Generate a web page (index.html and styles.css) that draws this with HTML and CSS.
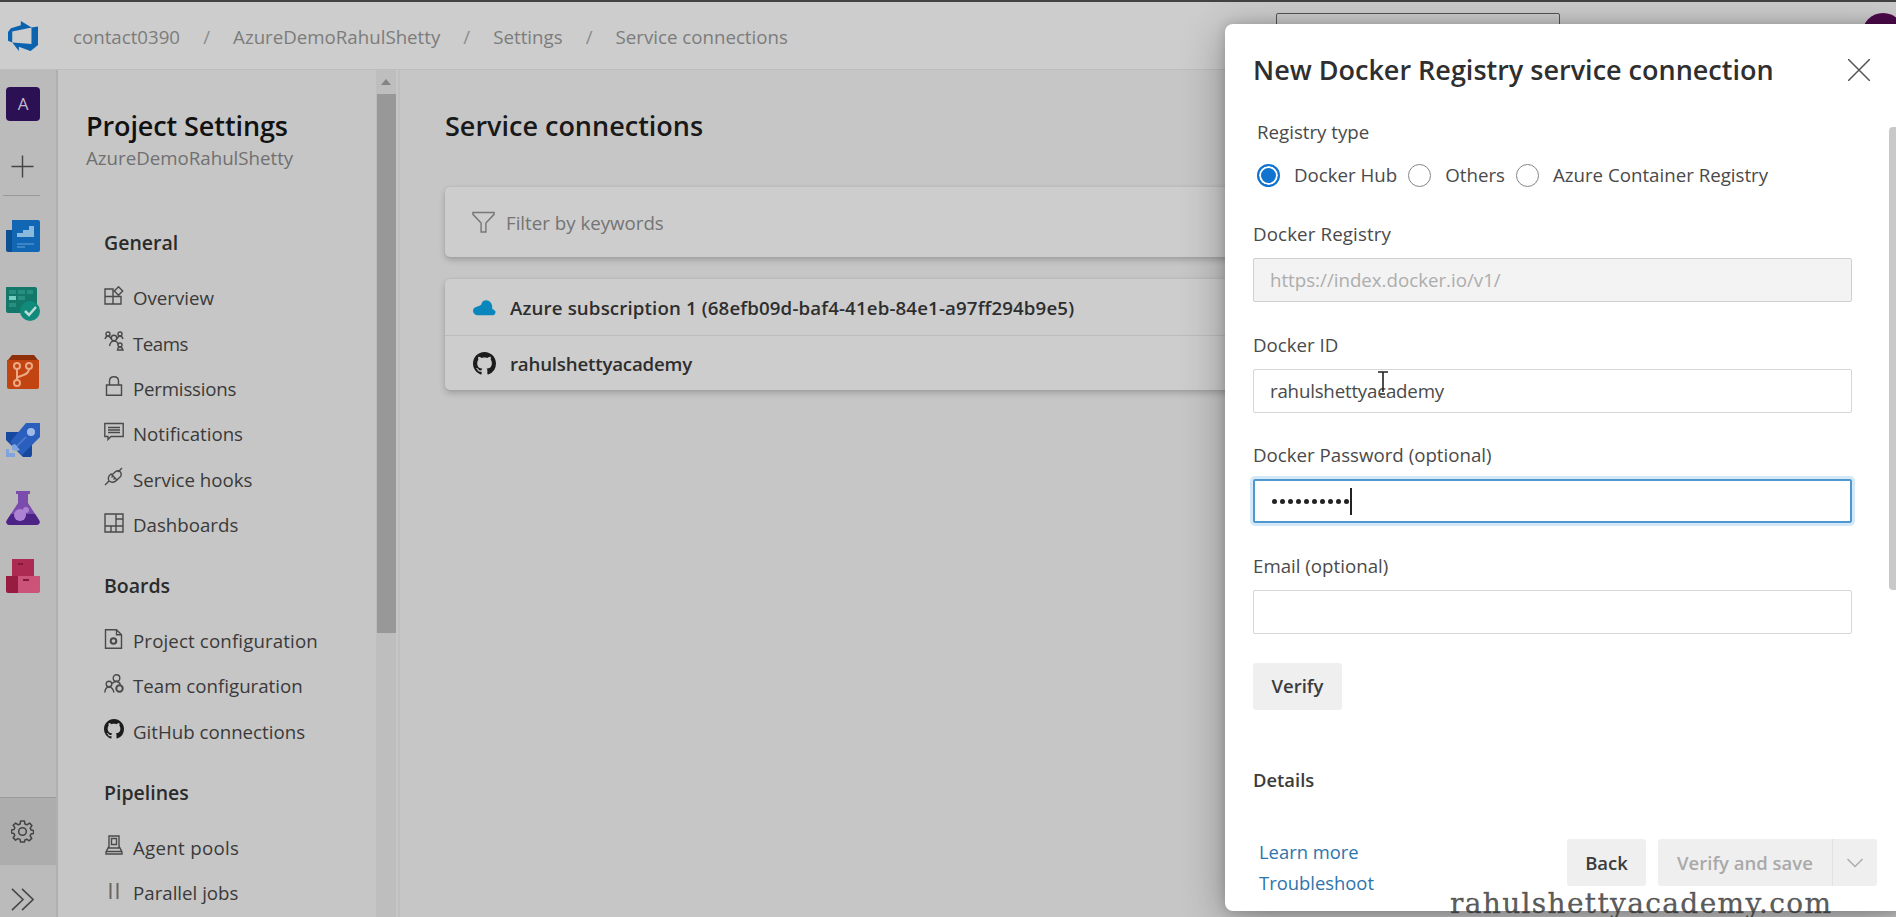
FILE: index.html
```html
<!DOCTYPE html>
<html lang="en">
<head>
<meta charset="utf-8">
<title>Service connections</title>
<link rel="stylesheet" href="styles.css">
</head>
<body>
<svg width="0" height="0" class="defs">
  <symbol id="github" viewBox="0 0 16 16"><path d="M8 0C3.58 0 0 3.58 0 8c0 3.54 2.29 6.53 5.47 7.59.4.07.55-.17.55-.38 0-.19-.01-.82-.01-1.49-2.01.37-2.53-.49-2.69-.94-.09-.23-.48-.94-.82-1.13-.28-.15-.68-.52-.01-.53.63-.01 1.08.58 1.23.82.72 1.21 1.87.87 2.33.66.07-.52.28-.87.51-1.07-1.78-.2-3.64-.89-3.64-3.95 0-.87.31-1.59.82-2.15-.08-.2-.36-1.02.08-2.12 0 0 .67-.21 2.2.82.64-.18 1.32-.27 2-.27s1.36.09 2 .27c1.53-1.04 2.2-.82 2.2-.82.44 1.1.16 1.92.08 2.12.51.56.82 1.27.82 2.15 0 3.07-1.87 3.75-3.65 3.95.29.25.54.73.54 1.48 0 1.07-.01 1.93-.01 2.2 0 .21.15.46.55.38A8.01 8.01 0 0 0 16 8c0-4.42-3.58-8-8-8z"/></symbol>
</svg>
<div class="app">
  <header class="topbar">
    <svg class="logo" viewBox="1 1 14 14"><path fill="#0b62ae" d="M15 3.620v8.550l-3.500 2.870-5.425-1.975v1.960L3.004 11.010l8.950.7V4.046L15 3.620zm-2.984.428L6.994 1v2.001L2.383 4.356 1 6.130v4.029l1.978.873V5.869l9.038-1.821z"/></svg>
    <nav class="crumbs">
      <span>contact0390</span><i>/</i><span>AzureDemoRahulShetty</span><i>/</i><span>Settings</span><i>/</i><span>Service connections</span>
    </nav>
    <div class="search"></div>
    <div class="avatar"></div>
  </header>
  <div class="body">
    <aside class="rail">
      <div class="project">A</div>
      <svg class="plus" viewBox="0 0 24 24"><path d="M12 0.500V23.500M0.500 12H23.500" stroke="#444" stroke-width="1.500"/></svg>
      <div class="line"></div>
      <svg class="tile" viewBox="0 0 34 34"><path fill="#0c4f93" d="M0 11h8v22H2q-2 0-2-2z"/><path fill="#1267b5" d="M6 1h26q2 0 2 2v28q0 2-2 2H6z"/><path fill="#8bb9dc" d="M11 18v-4h6v-3h6V7h5v11z"/><path fill="#3c86c6" d="M11 24h17v2H11zM11 27h8v2h-8z"/></svg>
      <svg class="tile" viewBox="0 0 34 34"><path fill="#13776a" d="M0 0h29q2 0 2 2v24H2q-2 0-2-2z"/><path fill="#35a090" d="M12 3h7v4h-7zM21 3h6v4h-6zM12 9h7v4h-7zM3 16h7v4H3zM3 3h7v4H3z" opacity=".6"/><path fill="#76cfc0" d="M3 9h7v4H3z"/><circle cx="24" cy="24" r="10" fill="#108b7b"/><path d="m19 24 4 4 7-8" fill="none" stroke="#c2dcd8" stroke-width="2.500"/></svg>
      <svg class="tile" viewBox="0 0 34 34"><path fill="#8e2f0a" d="M6 0h22l4 5H2z"/><path fill="#c24410" d="M1 5h32v27q0 2-2 2H3q-2 0-2-2z"/><g fill="none" stroke="#eda985" stroke-width="2"><circle cx="11" cy="11" r="3"/><circle cx="23" cy="11" r="3"/><circle cx="11" cy="28" r="3"/><path d="M11 14v11M23 14c0 7-10 6-12 9"/></g></svg>
      <svg class="tile" viewBox="0 0 34 34"><path fill="#1648a0" d="M0 9h17L26 20v12l-1 2h-8L0 17z"/><path fill="#2b5fbd" d="M20 0h14v14L16 32 4 19z"/><circle cx="25" cy="9" r="4" fill="#a1bbe8"/><path d="m10 24 10-10" stroke="#5280d0" stroke-width="1.500"/><path fill="#7fa3dd" d="M0 26h3v4h6v4H0zM6 22l3-1 5 6-3 1-5-1z"/></svg>
      <svg class="tile" viewBox="0 0 34 34"><path fill="#7a4cae" d="M10 0h14v3h-2v9l11 17q2 4-2 5H3q-4-1-2-5l11-17V3h-2z"/><path fill="#4e2387" d="M5 23h24l4 6q2 4-2 5H3q-4-1-2-5z"/><circle cx="14" cy="24" r="6" fill="#ad82d3"/><circle cx="20" cy="19" r="3" fill="#ad82d3"/></svg>
      <svg class="tile" viewBox="0 0 34 34"><path fill="#ad2b52" d="M6 0h22v17H6z"/><path fill="#971c40" d="M0 17h12v17H2q-2 0-2-2z"/><path fill="#cb5379" d="M12 17h22v15q0 2-2 2H12z"/><path fill="#83183a" d="M12 4h5v2h-5zM17 20h6v2h-6z"/></svg>
      <div class="rail-end">
        <div class="gear"><svg viewBox="0 0 24 24"><path fill="none" stroke="#444" stroke-width="1.600" stroke-linejoin="round" d="M10 1h4l.6 3.200 2 .8L19.400 3.200l2.400 2.600-1.700 2.700.8 2 2.600.5v3l-2.700.7-.8 2 1.600 2.500-2.500 2.500-2.600-1.600-2 .8L14 23h-4l-.6-2.800-2-.8-2.700 1.600-2.400-2.500 1.600-2.500-.8-2L.5 13.500v-3l2.700-.6.8-2L2.300 5.500l2.500-2.300L7.500 5l2-.8z"/><circle cx="12" cy="12" r="4" fill="none" stroke="#444" stroke-width="1.600"/></svg></div>
        <svg class="expand" viewBox="0 0 24 24"><path d="m1 1 11.500 11L1 23M11.500 1 23 12 11.500 23" fill="none" stroke="#484848" stroke-width="1.700"/></svg>
      </div>
    </aside>
    <aside class="settings">
      <div class="settings-list">
        <h2 class="ps">Project Settings</h2>
        <p class="sub">AzureDemoRahulShetty</p>
        <h3 class="h-gen">General</h3>
        <a><svg viewBox="0 0 20 20"><path d="M1 3h8v15H1zM9 10.500H1M9 10.500h8V18H9M14.500.8l4.200 4.200-4.200 4.200L10.300 5z"/></svg><span>Overview</span></a>
        <a><svg viewBox="0 0 20 20"><circle cx="4" cy="3" r="2"/><circle cx="16" cy="3" r="2"/><circle cx="10" cy="7" r="2.700"/><circle cx="16" cy="14" r="2"/><path d="M1 8q1-3 3-3t3 3M13 8q1-3 3-3t3 3M5.500 15q1-5 4.500-5t4.500 4M13.500 19q.5-3 2.500-3t3 3z"/></svg><span class="tighter">Teams</span></a>
        <a><svg viewBox="0 0 20 20"><path d="M2.500 9h15v10.300h-15zM5.500 9V5Q5.500.7 10 .7T14.500 5v4"/></svg><span class="tight">Permissions</span></a>
        <a><svg viewBox="0 0 20 20"><path d="M.8 1.500h18.400v13H7l-3 3v-3H.8zM4 5.500h12M4 8h12M4 10.500h12"/></svg><span>Notifications</span></a>
        <a><svg viewBox="0 0 20 20"><path d="m1 18 4-4M14 5l4-4M5 14q-2-4 2-7l6 6q-4 4-8 1zM8 8l3-3q4-3 6 1 1 3-2 5l-2 2M7.500 10.500l2-2M9.500 12.500l2-2"/></svg><span>Service hooks</span></a>
        <a><svg viewBox="0 0 20 20"><path d="M1 1h18v18H1zM12 1v12H1M12 6h7M7 13v6M12 13h7M12 13v6"/></svg><span>Dashboards</span></a>
        <h3>Boards</h3>
        <a><svg viewBox="0 0 20 20"><path d="M1.500.8h11l5 5v13.400h-16zM12.500.8v5h5"/><circle cx="9.500" cy="12" r="2.800" stroke-width="2"/></svg><span class="loose">Project configuration</span></a>
        <a><svg viewBox="0 0 20 20"><circle cx="12.500" cy="4" r="3.300"/><circle cx="5" cy="10" r="2.800"/><circle cx="15.500" cy="14.500" r="3.200" stroke-width="2"/><path d="M.8 18.500q.5-5.500 4.200-5.500t5 5.500M8 9.500q2-2 4.500-2t4 3"/></svg><span>Team configuration</span></a>
        <a><svg class="solid" viewBox="0 0 20 20"><use href="#github" width="20" height="20"/></svg><span>GitHub connections</span></a>
        <h3>Pipelines</h3>
        <a><svg viewBox="0 0 20 20"><path d="M5 1h10v12H5zM7.500 3.500h5v6h-5zM5 11l-3 6v2h16v-2l-3-6M2 16.500h16"/></svg><span class="looser">Agent pools</span></a>
        <a><svg viewBox="0 0 20 20"><path stroke="#6c665c" stroke-width="2" d="M6.500 2v16M13.500 2v16"/></svg><span>Parallel jobs</span></a>
      </div>
      <div class="scroll"><div class="arrow"></div><div class="thumb"></div></div>
    </aside>
    <main>
      <h1>Service connections</h1>
      <div class="card filter">
        <svg viewBox="0 0 24 24"><path d="M1 1.500h22v2l-8.500 9V22h-5v-9.500L1 3.500z" fill="none" stroke="#777" stroke-width="1.500"/></svg><span>Filter by keywords</span>
      </div>
      <div class="card list">
        <div class="row"><svg viewBox="0 0 24 24"><path fill="#0987bd" d="M4 20Q0 19 0 15.500T4.500 11Q6 10.500 8.500 9q1-4.500 5.500-4.500 5 .5 6 6-.3 2 .5 3.500 3 .5 3 3t-2.500 3z"/></svg><span class="loose">Azure subscription 1 (68efb09d-baf4-41eb-84e1-a97ff294b9e5)</span></div>
        <div class="row"><svg viewBox="0 0 16 16"><use href="#github" fill="#1c1c1c"/></svg><span class="tight">rahulshettyacademy</span></div>
      </div>
    </main>
  </div>
</div>

<section class="panel">
  <div class="panel-head"><h2>New Docker Registry service connection</h2><svg viewBox="0 0 22 22"><path d="m0 0 22 22M22 0 0 22" stroke="#555" stroke-width="1.500"/></svg></div>
  <div class="panel-body">
    <div class="type-label">Registry type</div>
    <div class="radios">
      <b class="radio on"></b><span>Docker Hub</span>
      <b class="radio"></b><span>Others</span>
      <b class="radio"></b><span>Azure Container Registry</span>
    </div>
    <label class="loose">Docker Registry</label><div class="input off">https://index.docker.io/v1/</div>
    <label>Docker ID</label><div class="input"><span class="tight">rahulshettyacademy</span>
      <svg class="ibeam" viewBox="0 0 12 26"><path d="M1 1h10M6 1v20M3 23h5" fill="none" stroke="#222" stroke-width="1.600"/></svg></div>
    <label>Docker Password (optional)</label><div class="input focus"><span class="dots"><i></i><i></i><i></i><i></i><i></i><i></i><i></i><i></i><i></i><i></i></span><span class="caret"></span></div>
    <label>Email (optional)</label><div class="input"></div>
    <div class="btn verify">Verify</div>
    <h4>Details</h4>
  </div>
  <div class="panel-foot">
    <div class="links"><a>Learn more</a><a>Troubleshoot</a></div>
    <div class="btn back">Back</div>
    <div class="split"><div class="btn save">Verify and save</div><div class="btn drop"><svg viewBox="0 0 16 10"><path d="m.5 1 7.500 7.500L15.500 1" fill="none" stroke="#aaa" stroke-width="1.500"/></svg></div></div>
  </div>
  <div class="panel-thumb"></div>
</section>
<div class="watermark">rahulshettyacademy.com</div>
</body>
</html>
```

FILE: styles.css
```css
* { box-sizing: border-box; margin: 0; padding: 0; }
body { width: 1896px; height: 917px; overflow: hidden; position: relative; font: 18.700px/24px "Open Sans", "Noto Sans", sans-serif; color: #333; background: #c6c6c6; }
svg { display: block; flex: none; }
.defs { position: absolute; }
span, h1, h2, h3, h4, p, label, a { white-space: nowrap; }
.tight { letter-spacing: -.2px; }
.tighter { letter-spacing: -.5px; }
.loose { letter-spacing: .13px; }
.looser { letter-spacing: .3px; }
.app { display: flex; flex-direction: column; height: 917px; }

.topbar { height: 70px; flex: none; display: flex; align-items: center; background: #cdcdcd; border-top: 2px solid #434343; border-bottom: 1px solid #bcbcbc; padding-left: 8px; position: relative; }
.logo { width: 30px; height: 30px; }
.crumbs { display: flex; align-items: center; margin-left: 35px; color: #7c7c7c; padding-top: 2px; }
.crumbs i { font-style: normal; width: 53px; text-align: center; color: #8c8c8c; }
.search { position: absolute; left: 1276px; top: 11px; width: 284px; height: 42px; border: 1px solid #555; border-radius: 2px; }
.avatar { position: absolute; left: 1862px; top: 11px; width: 42px; height: 42px; border-radius: 50%; background: #4d0a4b; }

.body { flex: 1; display: flex; min-height: 0; }
.rail { width: 58px; flex: none; display: flex; flex-direction: column; background: #bbb; border-right: 2px solid #b0b0b0; padding: 17px 0 0 6px; }
.project { width: 34px; height: 34px; border-radius: 4px; background: #2b1153; color: #c2b8cf; font-size: 17px; line-height: 34px; text-align: center; flex: none; }
.plus { width: 23px; height: 23px; margin: 34px 0 0 5px; }
.line { width: 37px; height: 1px; background: #999; margin: 17px 0 23px -3px; flex: none; }
.tile { width: 34px; height: 34px; margin-bottom: 34px; }
.rail-end { margin: auto 0 0 -6px; }
.gear { height: 68px; border-top: 1px solid #9a9a9a; background: #adadad; padding: 22px 0 0 11px; }
.gear svg { width: 23px; height: 23px; }
.expand { width: 23px; height: 23px; margin: 23px 0 6px 11px; }

.settings { width: 342px; flex: none; display: flex; justify-content: space-between; border-right: 2px solid #bfbfbf; background: #c6c6c6; overflow: hidden; }
.settings-list { padding: 39px 0 0 28px; }
.ps { font-size: 27px; line-height: 34px; font-weight: 600; color: #111; letter-spacing: -.1px; }
.sub { color: #707070; line-height: 24px; margin-top: 3px; }
.settings-list h3 { font-size: 19.500px; font-weight: 600; line-height: 24px; height: 70.500px; padding: 26px 0 0 18px; color: #2b2b2b; }
.settings-list .h-gen { height: 105.500px; padding-top: 61px; }
.settings-list a { display: flex; align-items: center; gap: 9px; height: 45.400px; padding-left: 18px; color: #3a3a3a; }
.settings-list a svg { width: 20px; height: 20px; margin-top: -5px; fill: none; stroke: #4a4a4a; stroke-width: 1.400; }
.settings-list a svg.solid { fill: #1c1c1c; stroke: none; }
.scroll { width: 20px; background: #bebebe; display: flex; flex-direction: column; align-items: center; padding-top: 9px; margin-right: 2px; }
.arrow { border: 5px solid transparent; border-top: 0; border-bottom: 6px solid #858585; }
.thumb { width: 19px; height: 539px; background: #989898; margin-top: 9px; flex: none; }

main { flex: 1; padding: 39px 0 0 45px; background: #c6c6c6; }
h1 { font-size: 27px; line-height: 34px; font-weight: 600; color: #191919; }
.card { background: #cdcdcd; border-radius: 5px; box-shadow: 0 3px 6px rgba(0,0,0,.2), 0 0 2px rgba(0,0,0,.08); }
.filter { height: 70px; margin-top: 44px; display: flex; align-items: center; padding-left: 27px; gap: 11px; color: #747474; }
.filter svg { width: 23px; height: 23px; }
.filter span { padding-top: 2px; }
.list { margin-top: 22px; height: 111px; }
.row { height: 56px; display: flex; align-items: center; gap: 14px; padding: 1px 0 0 28px; font-weight: 600; color: #2e2e2e; }
.row + .row { border-top: 1px solid #bcbcbc; height: 55px; }
.row svg { width: 23px; height: 23px; }

.panel { position: absolute; left: 1225px; top: 24px; width: 680px; height: 887px; background: #fff; border-radius: 8px; box-shadow: 0 8px 44px rgba(0,0,0,.32), 0 0 12px rgba(0,0,0,.16); padding: 0 53px 0 28px; display: flex; flex-direction: column; color: #4a4a4a; }
.panel-head { height: 92px; flex: none; display: flex; align-items: center; justify-content: space-between; margin-right: -18px; }
.panel-head h2 { font-size: 27px; line-height: 34px; font-weight: 600; color: #2f2f2f; }
.panel-head svg { width: 22px; height: 22px; }
.type-label { margin: 4px 0 0 4px; }
.radios { display: flex; align-items: center; height: 24px; margin: 19px 0 35px 4px; }
.radio { width: 23px; height: 23px; border-radius: 50%; border: 1.500px solid #858585; flex: none; }
.radio.on { border: 2px solid #0f73cf; background: #0f73cf; box-shadow: inset 0 0 0 2px #fff; }
.radios span { margin: 0 11px 0 14px; }
label { display: block; height: 24px; margin-bottom: 12px; }
.input { height: 44px; margin-bottom: 30.670px; border: 1.500px solid #d6d6d6; border-radius: 2px; padding-left: 16px; display: flex; align-items: center; position: relative; }
.off { background: #f3f3f3; color: #adadad; border-color: #cfcfcf; }
.focus { border: 2px solid #4f97cf; box-shadow: 0 0 0 3px #d5e8f7; }
.dots { display: flex; gap: 3px; padding-left: 1px; }
.dots i { width: 5px; height: 5px; border-radius: 50%; background: #222; }
.caret { width: 1.500px; height: 27px; background: #222; margin-left: 1px; }
.ibeam { position: absolute; left: 123px; top: 1px; width: 12px; height: 26px; }
.btn { height: 47px; background: #efefef; border-radius: 3px; font-weight: 600; color: #3c3c3c; display: flex; align-items: center; justify-content: center; font-size: 18.500px; }
.verify { width: 89px; margin-top: -2px; }
h4 { font-size: 18.400px; font-weight: 600; margin-top: 58px; color: #3c3c3c; }
.panel-foot { position: absolute; left: 34px; right: 28px; top: 815px; display: flex; }
.links { display: flex; flex-direction: column; color: #2d74ad; width: 308px; font-size: 18.400px; line-height: 31px; margin-top: -3px; }
.back { width: 79px; margin-right: 12px; }
.split { display: flex; }
.save { width: 174px; border-radius: 3px 0 0 3px; color: #a9a9a9; }
.drop { width: 45px; border-left: 1px solid #e2e2e2; border-radius: 0 3px 3px 0; }
.drop svg { width: 16px; height: 10px; }
.panel-thumb { position: absolute; left: 664px; top: 103px; width: 10px; height: 463px; background: #c9c9c9; border-radius: 4px; }
.watermark { position: absolute; left: 1450px; top: 886px; font: 28px/35px "DejaVu Serif", serif; letter-spacing: 1.350px; color: rgba(40,40,40,.75); -webkit-text-stroke: .4px rgba(40,40,40,.6); white-space: nowrap; }
```
